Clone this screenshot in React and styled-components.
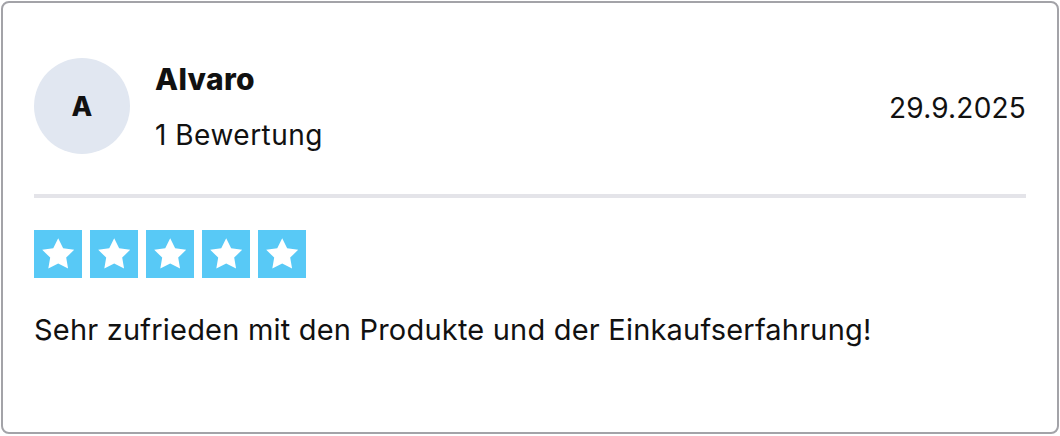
import React from "react";
import styled, { createGlobalStyle } from "styled-components";

const GlobalStyle = createGlobalStyle`
  html, body {
    margin: 0;
    padding: 0;
    background: #ffffff;
  }
  body {
    font-family: Inter, Roboto, "Liberation Sans", sans-serif;
    color: #111111;
  }
`;

const Page = styled.div`
  padding: 1px;
`;

const Card = styled.div`
  box-sizing: border-box;
  width: 1058px;
  height: 433px;
  border: 2px solid #a3a3a8;
  border-radius: 8px;
  padding: 55px 31px 0 31px;
`;

const Header = styled.div`
  display: flex;
  align-items: center;
  justify-content: space-between;
`;

const Author = styled.div`
  display: flex;
  align-items: center;
  gap: 25px;
`;

const Avatar = styled.div`
  width: 96px;
  height: 96px;
  border-radius: 50%;
  background: #e1e7f1;
  display: flex;
  align-items: center;
  justify-content: center;
  font-size: 27px;
  font-weight: 800;
  color: #111111;
`;

const NameBlock = styled.div`
  display: flex;
  flex-direction: column;
`;

const Name = styled.div`
  font-size: 30px;
  font-weight: 800;
  letter-spacing: 0.3px;
  line-height: 36px;
`;

const ReviewCount = styled.div`
  font-size: 28px;
  letter-spacing: 0.5px;
  line-height: 32px;
  margin-top: 22px;
`;

const DateLabel = styled.div`
  font-size: 28px;
  letter-spacing: 0.2px;
  line-height: 34px;
  margin-top: 4px;
`;

const Divider = styled.hr`
  border: none;
  height: 4px;
  background: #e4e4e9;
  margin: 40px 0 0 0;
`;

const Stars = styled.div`
  display: flex;
  gap: 8px;
  margin-top: 32px;
`;

const StarBox = styled.div`
  width: 48px;
  height: 48px;
  background: ${(p) => (p.$filled ? "#58c9f6" : "#dcdce6")};
  display: flex;
  align-items: center;
  justify-content: center;
`;

const Comment = styled.p`
  margin: 35px 0 0 0;
  font-size: 29px;
  letter-spacing: 0.2px;
  line-height: 34px;
`;

function Star() {
  return (
    <svg width="38.4" height="38.4" viewBox="0 0 24 24">
      <polygon
        fill="#ffffff"
        points="12,2 15.09,8.26 22,9.27 17,14.14 18.18,21.02 12,17.77 5.82,21.02 7,14.14 2,9.27 8.91,8.26"
      />
    </svg>
  );
}

function App() {
  const rating = 5;
  return (
    <Page>
      <GlobalStyle />
      <Card>
        <Header>
          <Author>
            <Avatar>A</Avatar>
            <NameBlock>
              <Name>Alvaro</Name>
              <ReviewCount>1 Bewertung</ReviewCount>
            </NameBlock>
          </Author>
          <DateLabel>29.9.2025</DateLabel>
        </Header>
        <Divider />
        <Stars>
          {[1, 2, 3, 4, 5].map((i) => (
            <StarBox key={i} $filled={i <= rating}>
              <Star />
            </StarBox>
          ))}
        </Stars>
        <Comment>Sehr zufrieden mit den Produkte und der Einkaufserfahrung!</Comment>
      </Card>
    </Page>
  );
}

export default App;
